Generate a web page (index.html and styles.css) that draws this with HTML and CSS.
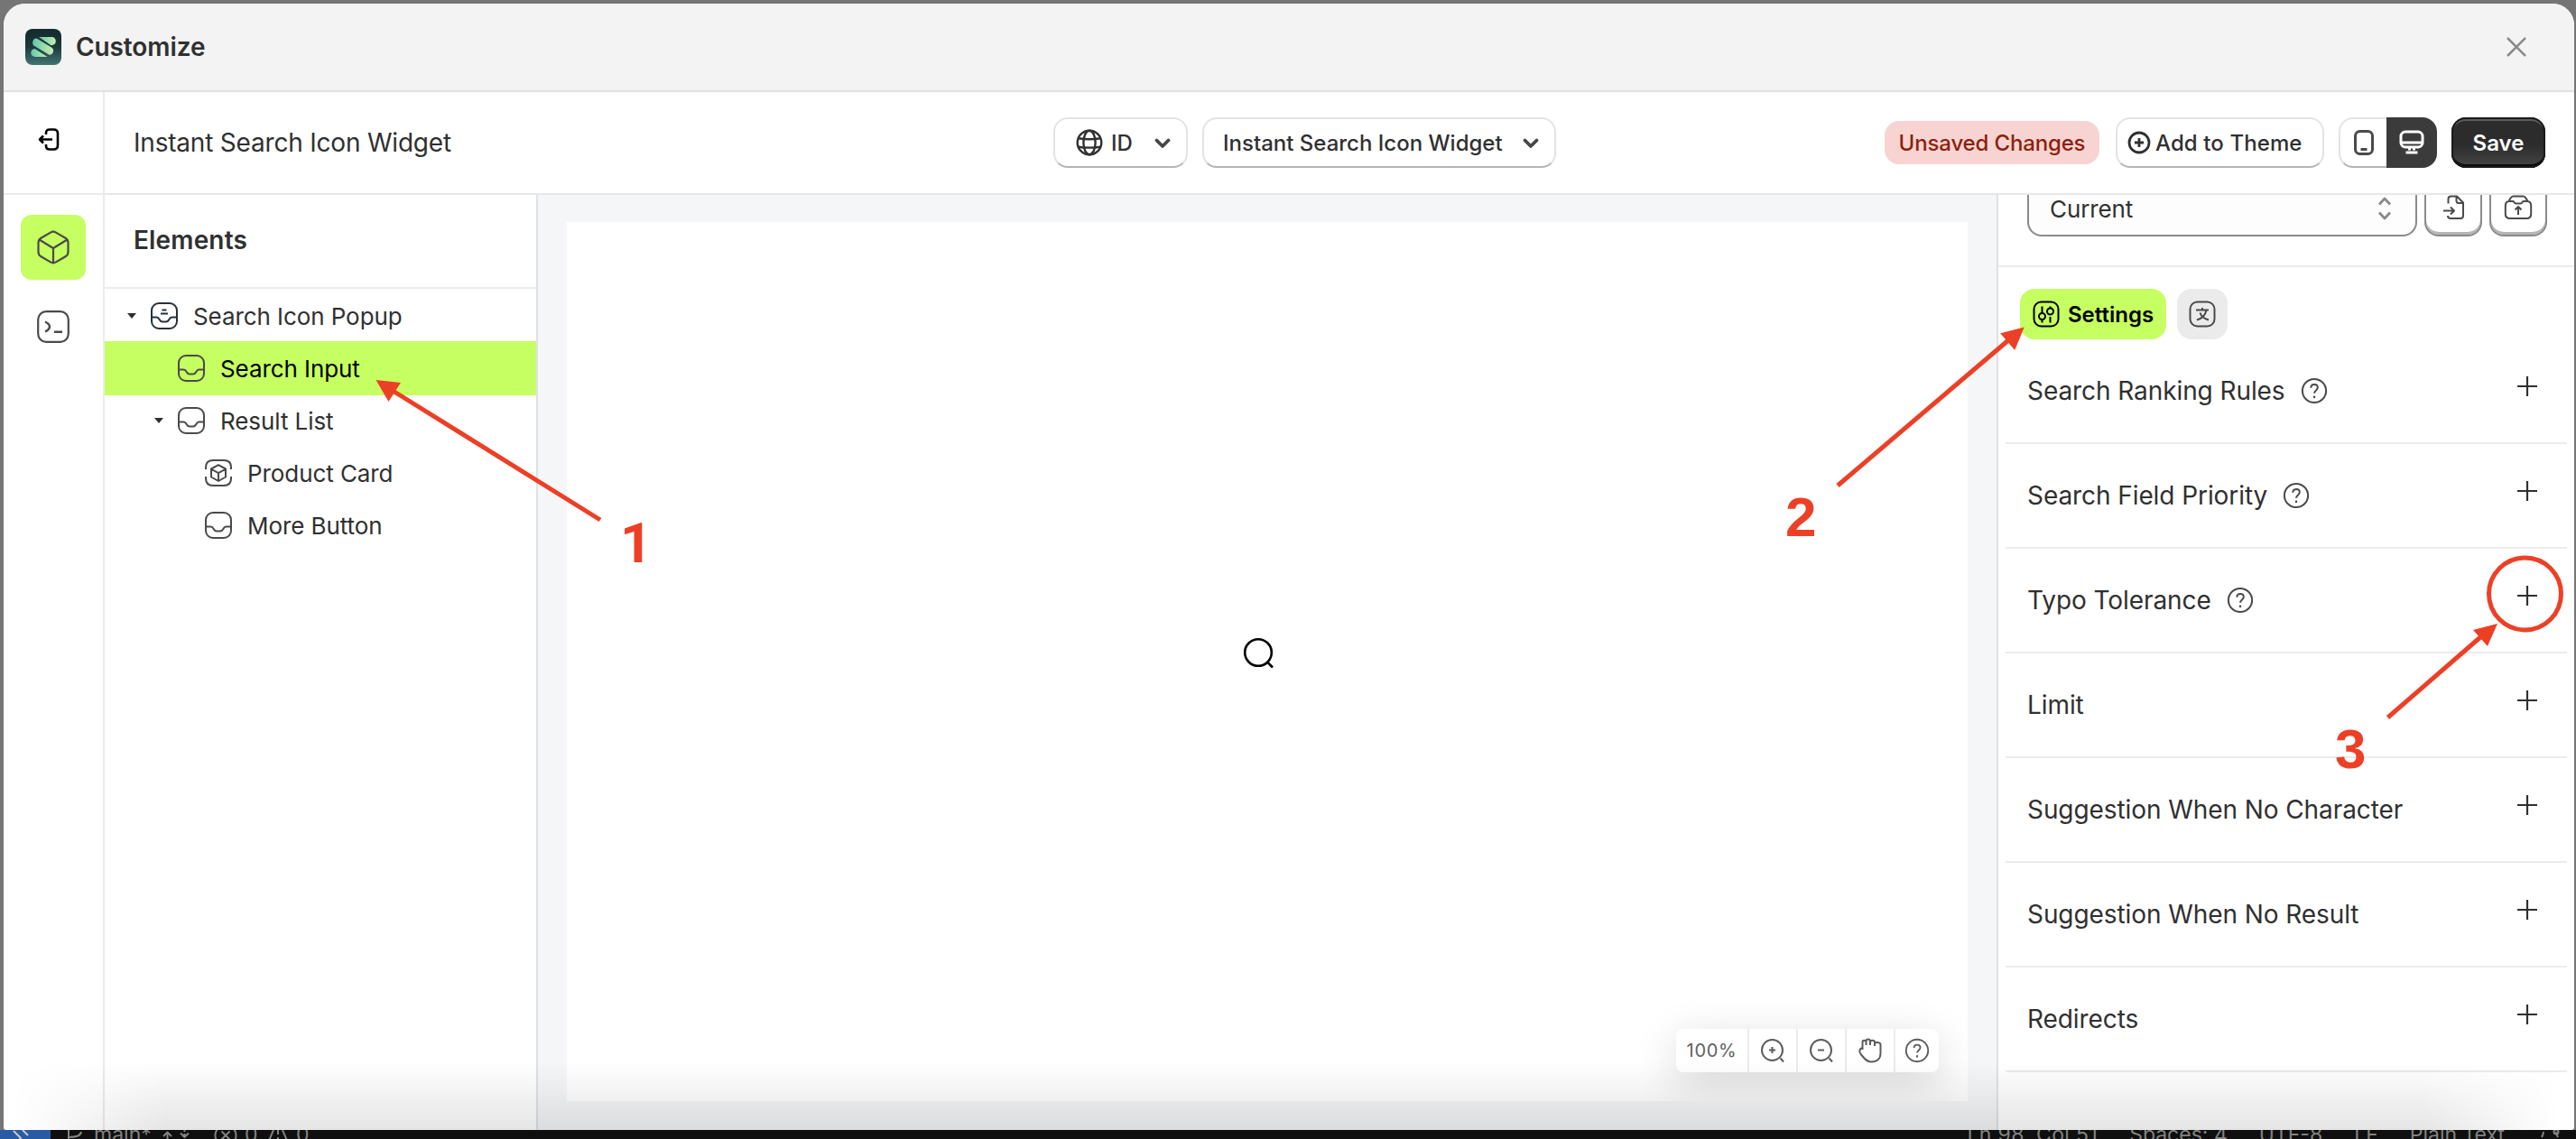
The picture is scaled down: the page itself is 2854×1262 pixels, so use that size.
FILE: index.html
```
<!DOCTYPE html>
<html lang="en">

<head>
    <meta charset="UTF-8">
    <title>Customize</title>
    <link rel="stylesheet" href="styles.css">
</head>

<body>
    <svg class="sprite">
        <defs>
            <linearGradient id="logoBg" x1="0" y1="0" x2="0" y2="1">
                <stop offset="0" stop-color="#142a2b"/>
                <stop offset=".5" stop-color="#1b3a3c"/>
                <stop offset="1" stop-color="#417472"/>
            </linearGradient>
            <linearGradient id="logoFg" x1="0" y1="0" x2="1" y2="0">
                <stop offset="0" stop-color="#63c5ad"/>
                <stop offset="1" stop-color="#c5efae"/>
            </linearGradient>
        </defs>
        <symbol id="tray" viewBox="0 0 30 30">
            <rect x="1" y="1" width="28" height="28" rx="8"/>
            <path d="M1 16.500h5.500c2 0 2.500 1.200 3.300 2.700.9 1.700 1.700 2.300 3.200 2.300h4c1.500 0 2.300-.6 3.200-2.300.8-1.500 1.300-2.700 3.300-2.700H29"/>
        </symbol>
        <symbol id="chevron" viewBox="0 0 18 12">
            <path d="M2.500 2.500L9 9l6.500-6.500"/>
        </symbol>
        <symbol id="help" viewBox="0 0 30 30">
            <circle cx="15" cy="15" r="13.100"/>
            <path d="M11.300 11.800c0-2.200 1.600-3.700 3.800-3.700s3.700 1.400 3.700 3.400c0 2.900-3.700 3.100-3.700 6.300"/>
            <path d="M15 21.600v.5" stroke-linecap="round" stroke-width="2.400"/>
        </symbol>
        <symbol id="plus" viewBox="0 0 24 24">
            <path d="M12 1v22M1 12h22"/>
        </symbol>
    </svg>

    <div class="modal">
        <header class="titlebar">
            <svg class="logo" viewBox="0 0 40 40">
                <rect width="40" height="40" rx="8" fill="url(#logoBg)"/>
                <path d="M15 9h14.500a4.600 4.600 0 0 1 1.500 8.800l-2.500.4z" fill="url(#logoFg)"/>
                <path d="M12.500 10.500L29 20.500a4.500 4.500 0 0 1-2.500 8.300L11 19.500a4.700 4.700 0 0 1 1.500-9z" fill="url(#logoFg)"/>
                <path d="M10.500 22l14 9H11a4.500 4.500 0 0 1-.5-9z" fill="url(#logoFg)"/>
            </svg>
            <h1>Customize</h1>
            <svg class="close" viewBox="0 0 24 24"><path d="M2 2l20 20M22 2L2 22"/></svg>
        </header>

        <div class="body">
            <nav class="rail">
                <div class="rail-exit">
                    <svg viewBox="0 0 24 28"><path d="M9 8V6.500C9 3.500 10.500 2.500 13 2.500h4.500c3 0 4.500 1.500 4.500 4.500v13c0 3-1.500 4.500-4.500 4.500H13c-2.500 0-4-1-4-4V19M16 13.500H2M6 9.500l-4 4 4 4"/></svg>
                </div>
                <div class="rail-item active">
                    <svg viewBox="0 0 36 38"><path d="M15 2.600c2-1.200 4-1.200 6 0l10.500 6.200c2 1.200 3 2.700 3 5v10.400c0 2.300-1 3.800-3 5L21 35.400c-2 1.200-4 1.200-6 0L4.500 29.200c-2-1.200-3-2.700-3-5V13.800c0-2.300 1-3.800 3-5zM2.500 10.500L18 20l15.500-9.500M18 20v16"/></svg>
                </div>
                <div class="rail-item">
                    <svg viewBox="0 0 36 38"><rect x="1.200" y="2.200" width="33.600" height="33.600" rx="9"/><path d="M9 13.500c3 1.500 5 3.500 5 5.500s-2 4-5 5.500M19 24.800h9" stroke-width="2.500"/></svg>
                </div>
            </nav>

            <div class="main">
                <div class="toolbar">
                    <div class="page-name">Instant Search Icon Widget</div>
                    <div class="pickers">
                        <button class="btn btn-lang">
                            <svg class="globe" viewBox="0 0 30 30"><circle cx="15" cy="15" r="13.300"/><ellipse cx="15" cy="15" rx="6.600" ry="13.300"/><path d="M2.500 10.300c8 1.200 17 1.200 25 0M2.500 19.700c8 1.200 17 1.200 25 0"/></svg>
                            <span>ID</span>
                            <svg class="chevron"><use href="#chevron"/></svg>
                        </button>
                        <button class="btn btn-widget">
                            <span>Instant Search Icon Widget</span>
                            <svg class="chevron"><use href="#chevron"/></svg>
                        </button>
                    </div>
                    <div class="actions">
                        <span class="badge"><span>Unsaved Changes</span></span>
                        <button class="btn btn-add">
                            <svg viewBox="0 0 26 26"><circle cx="13" cy="13" r="11"/><path d="M13 8v10M8 13h10"/></svg>
                            <span>Add to Theme</span>
                        </button>
                        <div class="devices">
                            <button class="btn device">
                                <svg viewBox="0 0 24 30"><rect x="2.500" y="2.500" width="19" height="25" rx="5"/><path d="M8.500 22.500h7"/></svg>
                            </button>
                            <button class="device device-on">
                                <svg viewBox="0 0 28 28"><rect x="2" y="2" width="24" height="17" rx="5"/><path d="M2.500 14h23M11.500 19v3.500M16.500 19v3.500M7.500 25h13"/></svg>
                            </button>
                        </div>
                        <button class="btn-save"><span>Save</span></button>
                    </div>
                </div>

                <div class="workspace">
                    <aside class="elements">
                        <h2>Elements</h2>
                        <ul class="tree">
                            <li>
                                <i class="caret"></i>
                                <svg class="dark"><use href="#tray"/><path d="M12.500 8.500h5M11 12.500h8"/></svg>
                                <span>Search Icon Popup</span>
                            </li>
                            <li class="level1 selected">
                                <svg><use href="#tray"/></svg>
                                <span>Search Input</span>
                            </li>
                            <li class="level1">
                                <i class="caret"></i>
                                <svg><use href="#tray"/></svg>
                                <span>Result List</span>
                            </li>
                            <li class="level2">
                                <svg viewBox="0 0 30 30"><path d="M1 11V9c0-5 3-8 8-8h12c5 0 8 3 8 8v2M1 19v2c0 5 3 8 8 8h12c5 0 8-3 8-8v-2"/><path d="M15 6.200l8 4.300v9L15 24l-8-4.500v-9zM7.500 11l7.500 4.200 7.500-4.200M15 15.200V24"/></svg>
                                <span>Product Card</span>
                            </li>
                            <li class="level2">
                                <svg><use href="#tray"/></svg>
                                <span>More Button</span>
                            </li>
                        </ul>
                    </aside>

                    <section class="canvas">
                        <div class="preview">
                            <svg class="search" viewBox="0 0 36 38"><circle cx="17" cy="17" r="14.800"/><path d="M27.500 28l5.500 5.500"/></svg>
                            <div class="zoombar">
                                <span class="zoom-value">100%</span>
                                <span><svg viewBox="0 0 28 28"><circle cx="13.500" cy="13.500" r="11.500"/><path d="M13.500 10v7M10 13.500h7M22.500 22.500l3.500 4"/></svg></span>
                                <span><svg viewBox="0 0 28 28"><circle cx="13.500" cy="13.500" r="11.500"/><path d="M10 13.500h7M22.500 22.500l3.500 4"/></svg></span>
                                <span><svg viewBox="0 0 28 28"><path d="M5.500 13V5c0-3 4-3 4 0v3M9.500 8V3.500c0-2.700 4.500-2.700 4.500 0V8M14 8V4.500c0-2.400 5-2.400 5 0V9M19 9V6.500c0-2.400 6.500-2 6.500 1V17c0 6-4 9.500-10 9.500-4 0-6-1.500-8.500-4.500l-3-3.500C.8 15 2.500 11.500 5.500 11"/></svg></span>
                                <span class="zoom-help"><svg viewBox="0 0 30 30"><use href="#help"/></svg></span>
                            </div>
                        </div>
                    </section>

                    <aside class="inspector">
                        <div class="version">
                            <div class="select">
                                <span>Current</span>
                                <svg viewBox="0 0 16 26"><path d="M2 8.500L8 2l6 6.500M2 17.500L8 24l6-6.500"/></svg>
                            </div>
                            <button class="square">
                                <svg viewBox="0 0 28 28"><path d="M8.500 9.500V4.500c0-2 1-3 3-3H18l7 7V23c0 2-1 3-3 3H11c-2 0-3-1-3-3M17.500 2v4.500c0 1.500 1 2.500 2.500 2.500h5M3 17.500h12M11 13.500l4 4-4 4"/></svg>
                            </button>
                            <button class="square">
                                <svg viewBox="0 0 32 28"><path d="M5.500 7l2-3.500C8.300 2.100 9 1.500 10.500 1.500h11c1.500 0 2.200.6 3 2L26.500 7M1.800 12c0-3 1.200-5 4.200-5h4c1 0 1.300.4 1.600 1.200.4 1 .9 1.300 1.900 1.300h5c1 0 1.500-.3 1.900-1.300.3-.8.6-1.200 1.600-1.200h4c3 0 4.200 2 4.200 5v9c0 3.500-1.500 5-5 5H7c-3.500 0-5.200-1.500-5.200-5zM16 22v-8.500M12.500 16.500L16 13l3.500 3.500"/></svg>
                            </button>
                        </div>
                        <div class="tabs">
                            <button class="tab tab-on">
                                <svg viewBox="0 0 30 30"><rect x="1.500" y="1.500" width="27" height="27" rx="8"/><circle cx="10.500" cy="17.500" r="3.500"/><circle cx="19.500" cy="12" r="3.500"/><path d="M10.500 6.500V14M10.500 21v3.500M19.500 6.500v2M19.500 18v6.500"/></svg>
                                <span>Settings</span>
                            </button>
                            <button class="tab">
                                <svg viewBox="0 0 30 30"><rect x="1.500" y="1.500" width="27" height="27" rx="8"/><path d="M8 10.500h14M15 8v2.500M19.500 10.500c-1 5-5 9.500-10.500 11M12.500 13.500c1 3.500 4.500 6.500 9.500 8"/></svg>
                            </button>
                        </div>
                        <ul class="settings">
                            <li><span>Search Ranking Rules</span><svg class="help"><use href="#help"/></svg><svg class="plus"><use href="#plus"/></svg></li>
                            <li><span>Search Field Priority</span><svg class="help"><use href="#help"/></svg><svg class="plus"><use href="#plus"/></svg></li>
                            <li><span>Typo Tolerance</span><svg class="help"><use href="#help"/></svg><svg class="plus"><use href="#plus"/></svg></li>
                            <li><span>Limit</span><svg class="plus"><use href="#plus"/></svg></li>
                            <li><span>Suggestion When No Character</span><svg class="plus"><use href="#plus"/></svg></li>
                            <li><span>Suggestion When No Result</span><svg class="plus"><use href="#plus"/></svg></li>
                            <li><span>Redirects</span><svg class="plus"><use href="#plus"/></svg></li>
                        </ul>
                    </aside>
                </div>
            </div>
        </div>
        <div class="shade"></div>
    </div>

    <!-- editor status bar peeking out below the modal -->
    <footer class="statusbar">
        <span class="remote"><svg viewBox="0 0 20 20"><path d="M1 1l8 8-8 8M11 0l6 6"/></svg></span>
        <svg class="branch" viewBox="0 0 18 20"><path d="M2 0v12M2 8c8 0 13-1 14-6M0 12h4"/></svg>
        <span class="main-branch">main*</span>
        <svg class="sync" viewBox="0 0 32 20"><path d="M5.500 14V3M1 7l4.500-4.500L10 7M24.500 0v2M24.500 4v4M20 3.500L24.500 8 29 3.500"/></svg>
        <svg class="error" viewBox="0 0 26 20"><circle cx="13" cy="6" r="11.500"/><path d="M8.500 1.500l9 9M17.500 1.500l-9 9"/></svg>
        <span class="count">0</span>
        <svg class="warning" viewBox="0 0 24 20"><path d="M7 0L1 14h22L17 0M12 0v5M12 8v2"/></svg>
        <span class="count">0</span>
        <span class="pos">Ln 98, Col 51</span>
        <span>Spaces: 4</span>
        <span class="enc">UTF-8</span>
        <span>LF</span>
        <span>Plain Text</span>
        <svg class="bell" viewBox="0 0 22 20"><path d="M2 8c1-2 2-4 2-6M20 8c-1-2-2-4-2-6"/><circle cx="18" cy="2" r="2.500"/></svg>
    </footer>

    <!-- numbered steps -->
    <svg class="steps" viewBox="0 0 2854 1262">
        <path d="M665 576L432 431M2036 538L2231 372M2645.500 795L2755 700"/>
        <circle cx="2797.500" cy="658" r="40"/>
        <g class="heads">
            <path d="M416.500 421l27.500 3-13.500 21z"/>
            <path d="M2242.700 362.500l-26.500 6.800 16 18.700z"/>
            <path d="M2767 691l-27 7 16 18z"/>
        </g>
        <text class="one" x="687" y="623">1</text>
        <text x="1978" y="594">2</text>
        <text x="2587" y="851">3</text>
    </svg>
</body>

</html>
```
FILE: styles.css
```
* {
    box-sizing: border-box;
}

body {
    margin: 0;
    width: 2854px;
    height: 1262px;
    overflow: hidden;
    position: relative;
    background: #757575;
    color: #303030;
    font-family: Inter, "Liberation Sans", sans-serif;
    font-size: 26px;
}

h1, h2, ul {
    margin: 0;
    padding: 0;
    list-style: none;
}

button {
    font: inherit;
    color: inherit;
    border: 0;
    padding: 0;
    background: #fff;
}

svg {
    display: block;
    flex: none;
    fill: none;
    stroke: #4a4a4a;
    stroke-width: 2;
    stroke-linejoin: round;
}

.sprite {
    position: absolute;
    width: 0;
    height: 0;
}

.modal {
    position: relative;
    display: flex;
    flex-direction: column;
    height: 1248px;
    margin: 4px 2px 0 4px;
    border-radius: 24px 24px 3px 3px;
    overflow: hidden;
    background: #fff;
}

.titlebar {
    display: flex;
    align-items: center;
    height: 98px;
    flex: none;
    padding: 0 52px 0 24px;
    background: #f3f3f3;
    border-bottom: 2px solid #e1e1e1;
}

.logo {
    width: 40px;
    height: 40px;
    stroke: none;
}

.titlebar h1 {
    margin-left: 16px;
    font-size: 28px;
    font-weight: 600;
    letter-spacing: -.1px;
}

.close {
    width: 24px;
    height: 24px;
    margin-left: auto;
    stroke: #8a8a8a;
    stroke-width: 2.5;
}

.body {
    display: flex;
    flex: 1;
    min-height: 0;
}

/* left rail */
.rail {
    width: 112px;
    border-right: 2px solid #ebebeb;
}

.rail-exit {
    height: 114px;
    padding: 39px 0 0 38px;
    border-bottom: 2px solid #ebebeb;
}

.rail-exit svg {
    width: 24px;
    height: 28px;
    stroke: #000;
    stroke-width: 2.6;
}

.rail-item {
    display: flex;
    align-items: center;
    justify-content: center;
    width: 72px;
    height: 72px;
    margin: 22px 0 -6px 19px;
    border-radius: 12px;
}

.rail-item svg {
    width: 36px;
    height: 38px;
    stroke-width: 2.2;
}

.active {
    background: #c6ff61;
}

.main {
    display: flex;
    flex-direction: column;
    flex: 1;
    min-width: 0;
}

/* toolbar */
.toolbar {
    display: flex;
    align-items: center;
    height: 114px;
    flex: none;
    border-bottom: 2px solid #e6e7ea;
    font-size: 24px;
    font-weight: 500;
}

.page-name {
    width: 1051px;
    padding-left: 32px;
    font-size: 28px;
    font-weight: 400;
    letter-spacing: -.2px;
    white-space: nowrap;
}

.pickers {
    display: flex;
    gap: 16px;
}

.btn {
    display: flex;
    align-items: center;
    height: 56px;
    border: 2px solid #e3e3e3;
    border-bottom-color: #b5b5b5;
    border-radius: 16px;
    white-space: nowrap;
}

.btn-lang {
    width: 149px;
    padding-left: 23px;
}

.globe {
    width: 30px;
    height: 30px;
    stroke: #303030;
    stroke-width: 2.4;
    margin-right: 9px;
}

.btn-widget {
    width: 392px;
    padding-left: 21px;
}

.chevron {
    width: 18px;
    height: 12px;
    margin: 2px 17px 0 auto;
    stroke: #45474a;
    stroke-width: 3.8;
    stroke-linecap: round;
}

.actions {
    display: flex;
    align-items: center;
    margin-left: auto;
    margin-right: 32px;
}

.badge {
    display: flex;
    align-items: center;
    justify-content: center;
    width: 238px;
    height: 48px;
    margin-right: 18px;
    border-radius: 16px;
    background: #f7d4d2;
    color: #8e1f0b;
    letter-spacing: -.15px;
    white-space: nowrap;
}

.btn-add {
    width: 231px;
    padding-left: 11px;
    margin-right: 16px;
    letter-spacing: .1px;
}

.btn-add svg {
    width: 26px;
    height: 26px;
    margin-right: 5px;
    stroke: #303030;
    stroke-width: 2.8;
}

.devices {
    display: flex;
    margin-right: 16px;
}

.device {
    display: flex;
    align-items: center;
    justify-content: center;
    width: 53px;
    border-right: 0;
    border-radius: 16px 0 0 16px;
}

.device svg {
    width: 24px;
    height: 30px;
    stroke-width: 3;
}

.device-on {
    width: 56px;
    height: 56px;
    border-radius: 0 16px 16px 0;
    background: #3b3b3b;
}

.device-on svg {
    width: 28px;
    height: 28px;
    stroke: #fff;
}

.btn-save {
    width: 104px;
    height: 56px;
    border-radius: 16px;
    color: #fff;
    font-weight: 600;
    background: linear-gradient(#2c2c2c 55%, #474747);
    box-shadow: inset 0 0 0 2px #1a1a1a, inset 0 -4px 0 #0c0c0c, inset 0 4px 0 #5c5c5c;
}

.workspace {
    display: flex;
    flex: 1;
    min-height: 0;
}

/* elements tree */
.elements {
    width: 480px;
    border-right: 2px solid #dfe1e6;
}

.elements h2 {
    height: 104px;
    padding-left: 32px;
    line-height: 101px;
    border-bottom: 2px solid #ebebeb;
    font-size: 28px;
    font-weight: 600;
    letter-spacing: .15px;
}

.tree li {
    display: flex;
    align-items: center;
    height: 60px;
    margin-bottom: -2px;
    padding-left: 25px;
    font-weight: 400;
    letter-spacing: -.08px;
}

.tree li svg {
    width: 30px;
    height: 30px;
    margin-right: 17px;
}

.tree li svg.dark {
    stroke: #25303a;
}

.tree .level1 {
    padding-left: 55px;
}

.tree .level2 {
    padding-left: 111px;
}

.tree .selected {
    padding-left: 81px;
    background: #c6ff61;
    color: #000;
}

.caret {
    width: 10px;
    height: 6px;
    margin-right: 16px;
    background: #303030;
    clip-path: polygon(0 0, 100% 0, 50% 100%);
}

/* canvas */
.canvas {
    flex: 1;
    padding: 30px 32px 32px;
    background: #f4f6f8;
}

.preview {
    position: relative;
    display: flex;
    align-items: center;
    justify-content: center;
    height: 974px;
    background: #fff;
    overflow: hidden;
}

.search {
    width: 36px;
    height: 38px;
    margin: 0 19px 17px 0;
    stroke: #000;
    stroke-width: 2.6;
}

.zoombar {
    position: absolute;
    right: 32px;
    bottom: 32px;
    display: flex;
    height: 48px;
    border-radius: 8px;
    background: #fff;
    box-shadow: 0 12px 48px rgba(0, 0, 0, .16);
    color: #616161;
    font-size: 20px;
    letter-spacing: .7px;
}

.zoombar span {
    display: flex;
    align-items: center;
    justify-content: center;
    width: 54px;
    border-left: 2px solid #ebebeb;
}

.zoombar .zoom-value {
    width: 79px;
    border: 0;
}

.zoombar .zoom-help {
    width: 50px;
}

.zoombar svg {
    width: 28px;
    height: 28px;
    stroke: #5c5c5c;
}

/* settings panel */
.inspector {
    width: 640px;
    border-left: 2px solid #dfe1e6;
}

.version {
    display: flex;
    gap: 8px;
    height: 80px;
    padding-left: 32px;
    border-bottom: 2px solid #ebebeb;
}

.select {
    display: flex;
    align-items: center;
    justify-content: space-between;
    width: 432px;
    height: 46px;
    padding: 0 26px 14px 23px;
    border: 2px solid #8a8a8a;
    border-top: 0;
    border-radius: 0 0 16px 16px;
    background: #fdfdfd;
    font-size: 26px;
    font-weight: 400;
    letter-spacing: -.1px;
}

.select svg {
    width: 16px;
    height: 26px;
    stroke: #8a8a8a;
    stroke-width: 2.8;
}

.square {
    display: flex;
    align-items: flex-start;
    justify-content: center;
    width: 64px;
    height: 46px;
    border: 2px solid #8a8a8a;
    border-top: 0;
    border-radius: 0 0 16px 16px;
    box-shadow: inset 0 -3px 0 #b5b5b5;
}

.square svg {
    width: 32px;
    height: 28px;
}

.tabs {
    display: flex;
    gap: 12px;
    padding: 24px 0 0 24px;
}

.tab {
    display: flex;
    align-items: center;
    justify-content: center;
    width: 56px;
    height: 56px;
    border-radius: 16px;
    background: #ebebeb;
}

.tab-on {
    width: 162px;
    background: #c6ff61;
    color: #000;
    font-size: 24px;
    font-weight: 600;
}

.tab svg {
    width: 30px;
    height: 30px;
}

.tab-on svg {
    margin-right: 9px;
    stroke: #000;
}

.settings {
    margin: 0 8px;
}

.settings li {
    display: flex;
    align-items: center;
    height: 116px;
    padding: 0 32px 0 24px;
    border-bottom: 2px solid #ebebeb;
    font-size: 28px;
    font-weight: 400;
    letter-spacing: -.08px;
}

.help {
    width: 30px;
    height: 30px;
    margin-left: 17px;
}

.plus {
    width: 24px;
    height: 24px;
    margin: 0 0 10px auto;
    stroke: #303030;
    stroke-width: 2.2;
}

/* soft shadow along the bottom edge */
.shade {
    position: absolute;
    left: 0;
    right: 0;
    bottom: 0;
    height: 76px;
    background: linear-gradient(transparent, rgba(0, 0, 0, .1));
    -webkit-mask-image: linear-gradient(90deg, transparent 10px, #000 180px, #000 2680px, transparent 2830px);
    mask-image: linear-gradient(90deg, transparent 10px, #000 180px, #000 2680px, transparent 2830px);
}

.statusbar {
    display: flex;
    align-items: flex-start;
    height: 10px;
    overflow: hidden;
    background: #0f0f0f;
    color: #828282;
    font-size: 23px;
    line-height: 28px;
}

.statusbar span {
    margin: -9px 35px 0 0;
    white-space: nowrap;
}

.statusbar svg {
    height: 20px;
    stroke: #828282;
}

.statusbar .remote {
    width: 56px;
    height: 20px;
    margin: 0 18px 0 0;
    padding-left: 14px;
    background: #285ba3;
}

.remote svg {
    width: 20px;
    stroke: #c8c8c8;
}

.branch {
    width: 18px;
    margin-right: 12px;
}

.statusbar .main-branch {
    width: 64px;
    margin-right: 12px;
}

.sync {
    width: 32px;
    margin-right: 25px;
}

.error {
    width: 26px;
    margin-right: 8px;
}

.statusbar .count {
    width: 15px;
    margin-right: 10px;
}

.warning {
    width: 24px;
    margin-right: 8px;
}

.statusbar .pos {
    margin-left: auto;
    letter-spacing: .35px;
}

.bell {
    width: 22px;
    margin: 0 18px 0 4px;
}

/* annotations lie over everything */
.steps {
    position: absolute;
    left: 0;
    top: 0;
    width: 2854px;
    height: 1262px;
    stroke: #ec4026;
    stroke-width: 5;
}

.steps .heads,
.steps text {
    stroke: none;
    fill: #ec4026;
}

.steps text {
    font: bold 62px "Liberation Sans", Arial, sans-serif;
}

.steps .one {
    font-family: Roboto, sans-serif;
}
```
